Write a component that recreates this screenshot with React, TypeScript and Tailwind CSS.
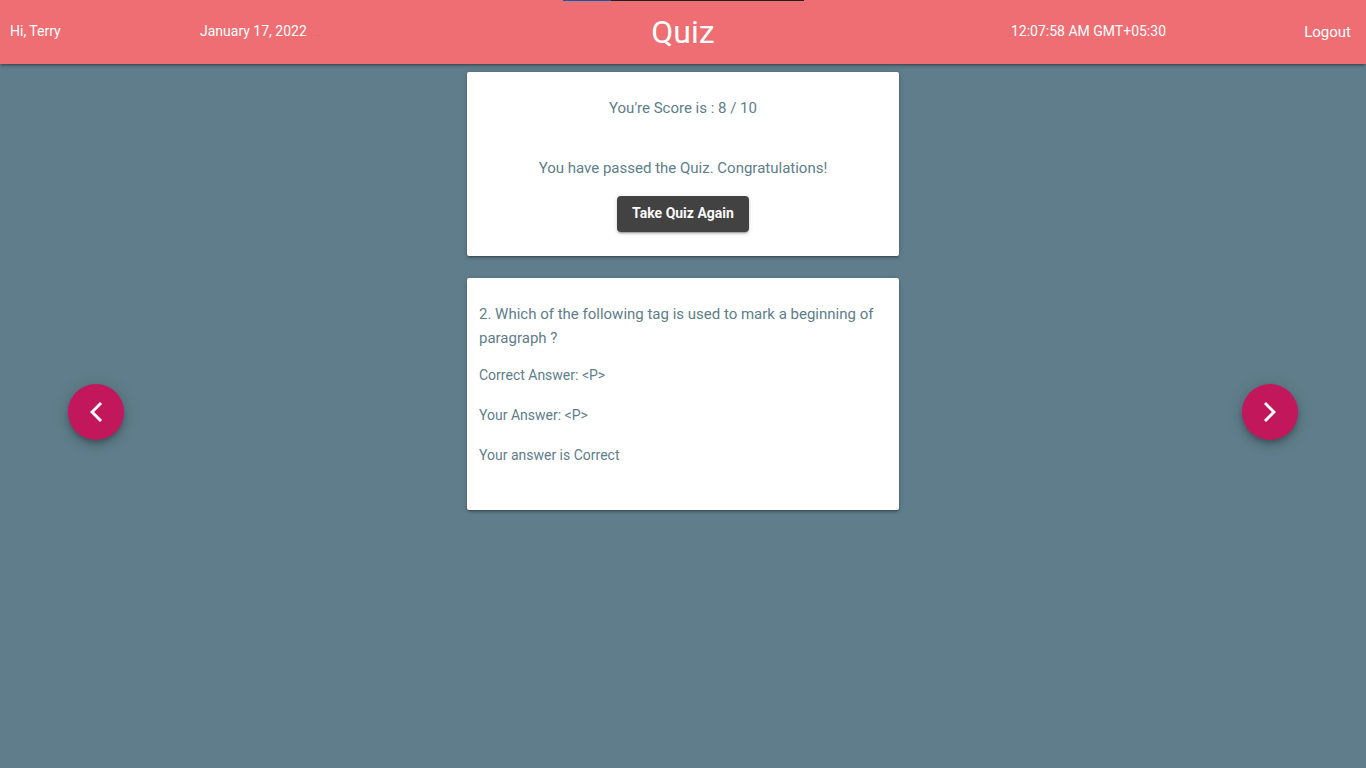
import type { ReactNode } from "react";

const answers = ["Correct Answer: <P>", "Your Answer: <P>", "Your answer is Correct"];

function Card({ children }: { children: ReactNode }) {
  return (
    <section className="rounded-xs bg-white px-3 pt-6 shadow-[0_2px_2px_0_rgba(0,0,0,0.14),0_3px_1px_-2px_rgba(0,0,0,0.12),0_1px_5px_0_rgba(0,0,0,0.2)]">
      {children}
    </section>
  );
}

function ArrowButton({ label, path }: { label: string; path: string }) {
  return (
    <button
      type="button"
      aria-label={label}
      className="mt-80 flex size-14 shrink-0 items-center justify-center rounded-full bg-[#c2185b] text-white shadow-[0_3px_5px_-1px_rgba(0,0,0,0.2),0_6px_10px_0_rgba(0,0,0,0.14),0_1px_18px_0_rgba(0,0,0,0.12)]"
    >
      <svg viewBox="0 0 24 24" className="size-6" fill="currentColor" aria-hidden="true">
        <path d={path} />
      </svg>
    </button>
  );
}

export default function App() {
  return (
    <div className="min-h-screen bg-[#607d8b] font-[Roboto,sans-serif] text-[15px] leading-6 text-[#607d8b]">
      <header className="relative grid h-16 grid-cols-[200px_1fr_auto_1fr_200px] items-center bg-[#ee6e73] text-white shadow-[0_2px_2px_0_rgba(0,0,0,0.14),0_3px_1px_-2px_rgba(0,0,0,0.12),0_1px_5px_0_rgba(0,0,0,0.2)]">
        <div className="absolute top-0 left-1/2 flex h-px w-[241px] -translate-x-[120px] bg-[#202020]">
          <div className="w-12 bg-[#0063b1]" />
        </div>
        <span className="pb-0.5 pl-2.5 text-sm">Hi, Terry</span>
        <span className="pb-0.5 text-sm">January 17, 2022</span>
        <h1 className="text-[32px] leading-16">Quiz</h1>
        <span className="pb-0.5 text-right text-sm">12:07:58 AM GMT+05:30</span>
        <a href="#logout" className="justify-self-end pr-[15px]">
          Logout
        </a>
      </header>

      <main className="flex items-start justify-between px-[5%]">
        <ArrowButton label="Previous question" path="M6 12 16 2l2.05 2.05L10.1 12l7.95 7.95L16 22z" />
        <div className="flex w-full max-w-[432px] flex-col gap-[22px] pt-2">
          <Card>
            <div className="flex flex-col items-center pb-6 text-center">
              <p>You're Score is : 8 / 10</p>
              <p className="mt-9">You have passed the Quiz. Congratulations!</p>
              <button
                type="button"
                className="mt-4 h-9 rounded-sm bg-[#424242] px-[15px] pb-0.5 text-sm font-bold text-[#fafafa] shadow-[0_3px_1px_-2px_rgba(0,0,0,0.2),0_2px_2px_0_rgba(0,0,0,0.14),0_1px_5px_0_rgba(0,0,0,0.12)]"
              >
                Take Quiz Again
              </button>
            </div>
          </Card>
          <Card>
            <h2>2. Which of the following tag is used to mark a beginning of paragraph ?</h2>
            <div className="flex flex-col gap-5 pt-[15px] pb-[45px] text-sm">
              {answers.map((line) => (
                <p key={line}>{line}</p>
              ))}
            </div>
          </Card>
        </div>
        <ArrowButton label="Next question" path="M18 12 8 2 5.95 4.05 13.9 12l-7.95 7.95L8 22z" />
      </main>
    </div>
  );
}
